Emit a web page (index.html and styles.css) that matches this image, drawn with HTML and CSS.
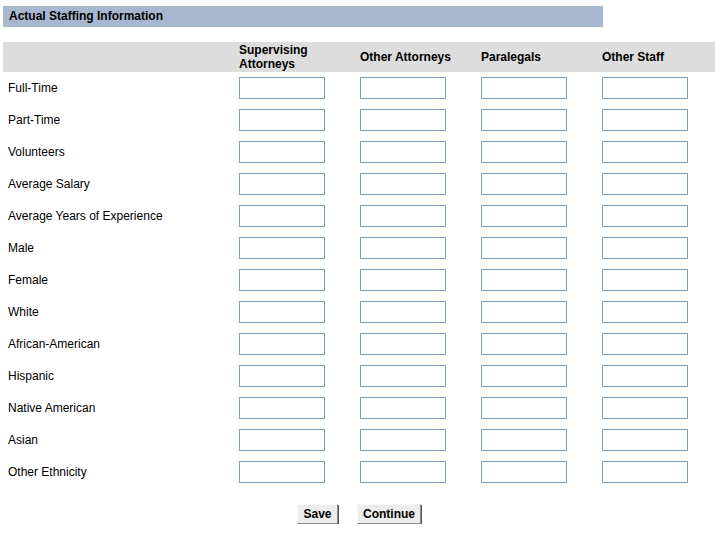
FILE: index.html
```html
<!DOCTYPE html>
<html>
<head>
<meta charset="utf-8">
<link rel="stylesheet" href="styles.css">
</head>
<body>
<div class="page">
  <div class="title">Actual Staffing Information</div>
  <div class="grid">
    <div class="head"></div>
    <div class="head">Supervising<br>Attorneys</div>
    <div class="head">Other Attorneys</div>
    <div class="head">Paralegals</div>
    <div class="head">Other Staff</div>

    <div class="label">Full-Time</div><div class="cell"><input class="box"></div><div class="cell"><input class="box"></div><div class="cell"><input class="box"></div><div class="cell"><input class="box"></div>
    <div class="label">Part-Time</div><div class="cell"><input class="box"></div><div class="cell"><input class="box"></div><div class="cell"><input class="box"></div><div class="cell"><input class="box"></div>
    <div class="label">Volunteers</div><div class="cell"><input class="box"></div><div class="cell"><input class="box"></div><div class="cell"><input class="box"></div><div class="cell"><input class="box"></div>
    <div class="label">Average Salary</div><div class="cell"><input class="box"></div><div class="cell"><input class="box"></div><div class="cell"><input class="box"></div><div class="cell"><input class="box"></div>
    <div class="label">Average Years of Experience</div><div class="cell"><input class="box"></div><div class="cell"><input class="box"></div><div class="cell"><input class="box"></div><div class="cell"><input class="box"></div>
    <div class="label">Male</div><div class="cell"><input class="box"></div><div class="cell"><input class="box"></div><div class="cell"><input class="box"></div><div class="cell"><input class="box"></div>
    <div class="label">Female</div><div class="cell"><input class="box"></div><div class="cell"><input class="box"></div><div class="cell"><input class="box"></div><div class="cell"><input class="box"></div>
    <div class="label">White</div><div class="cell"><input class="box"></div><div class="cell"><input class="box"></div><div class="cell"><input class="box"></div><div class="cell"><input class="box"></div>
    <div class="label">African-American</div><div class="cell"><input class="box"></div><div class="cell"><input class="box"></div><div class="cell"><input class="box"></div><div class="cell"><input class="box"></div>
    <div class="label">Hispanic</div><div class="cell"><input class="box"></div><div class="cell"><input class="box"></div><div class="cell"><input class="box"></div><div class="cell"><input class="box"></div>
    <div class="label">Native American</div><div class="cell"><input class="box"></div><div class="cell"><input class="box"></div><div class="cell"><input class="box"></div><div class="cell"><input class="box"></div>
    <div class="label">Asian</div><div class="cell"><input class="box"></div><div class="cell"><input class="box"></div><div class="cell"><input class="box"></div><div class="cell"><input class="box"></div>
    <div class="label">Other Ethnicity</div><div class="cell"><input class="box"></div><div class="cell"><input class="box"></div><div class="cell"><input class="box"></div><div class="cell"><input class="box"></div>
  </div>
  <div class="actions">
    <button class="btn save">Save</button>
    <button class="btn cont">Continue</button>
  </div>
</div>
</body>
</html>
```

FILE: styles.css
```css
html, body {
  margin: 0;
  padding: 0;
  background: #fff;
}
body {
  font-family: "Liberation Sans", Arial, sans-serif;
  font-size: 12px;
  color: #000;
}
.page {
  padding: 6px 0 0 3px;
  width: 712px;
}
.title {
  width: 594px;
  height: 21px;
  line-height: 21px;
  padding-left: 6px;
  background: #a6b7cf;
  font-weight: bold;
  font-size: 12px;
}
.grid {
  margin-top: 15px;
  display: grid;
  grid-template-columns: 236px 121px 121px 121px 113px;
  grid-auto-rows: 32px;
  grid-template-rows: 30px;
}
.head {
  background: #dddddd;
  font-weight: bold;
  line-height: 14px;
  display: flex;
  align-items: center;
  height: 30px;
}
.label {
  padding-left: 5px;
  display: flex;
  align-items: center;
}
.cell {
  display: flex;
  align-items: center;
}
.box {
  box-sizing: border-box;
  width: 86px;
  height: 22px;
  margin: 0;
  padding: 0 2px;
  border: 1px solid #7f9db9;
  background: #fff;
  font: inherit;
}
.actions {
  margin-top: 16px;
  display: flex;
  justify-content: center;
  gap: 19px;
}
.btn {
  box-sizing: border-box;
  height: 20px;
  margin: 0;
  padding: 0;
  font-family: "Liberation Sans", Arial, sans-serif;
  font-size: 12px;
  font-weight: bold;
  color: #000;
  background: #ececec;
  border: 1px solid;
  border-color: #f8f8f8 #888 #888 #f8f8f8;
  box-shadow: 1px 1px 0 #555;
}
.save { width: 41px; }
.cont { width: 64px; }
```
